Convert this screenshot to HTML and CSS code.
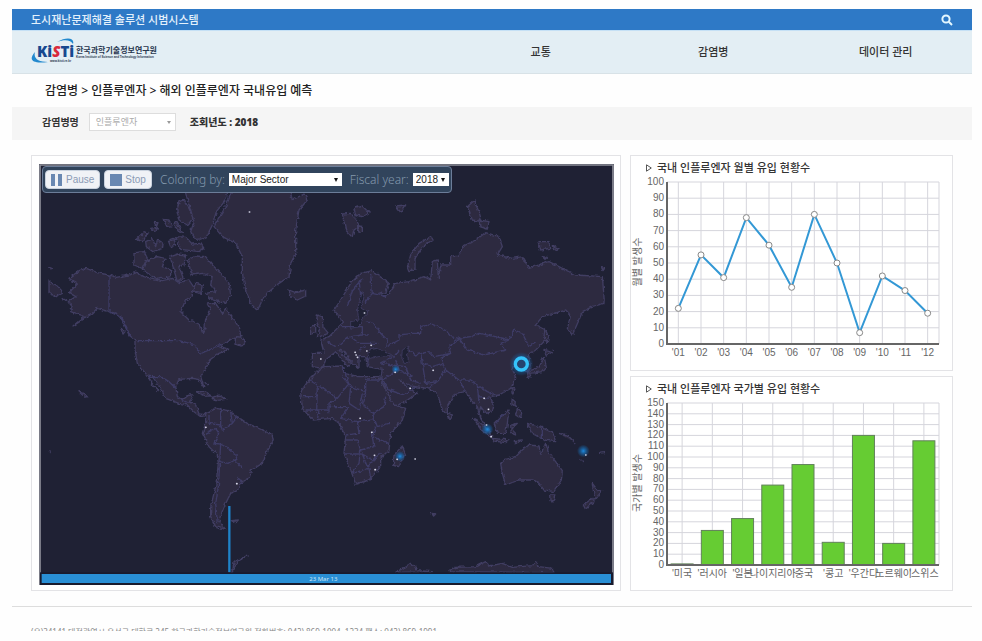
FILE: index.html
```html
<!DOCTYPE html>
<html lang="ko">
<head>
<meta charset="utf-8">
<title>도시재난문제해결 솔루션 시범시스템</title>
<link rel="stylesheet" href="styles.css">
</head>
<body>
<div class="shell">
  <header>
    <div class="topbar">
      <span>도시재난문제해결 솔루션 시범시스템</span>
      <button class="search" aria-label="검색">
        <svg viewBox="0 0 12 12"><circle cx="5" cy="5" r="3.6"/><path d="M7.8 7.8L11 11"/></svg>
      </button>
    </div>
    <div class="navbar">
      <a class="logo" href="#" aria-label="KISTI">
        <svg viewBox="0 0 130 28">
          <path class="swoosh" d="M26 4C36 -2 44 0 42 6C40 2 34 1 26 4Z M4 14C-3 22 1 26 17 24C8 24 2 21 4 14Z"/>
          <text class="kisti" x="6" y="19">Ki<tspan class="red">S</tspan>Ti</text>
          <text class="url" x="19" y="24">www.kisti.re.kr</text>
          <text class="org" x="45" y="15">한국과학기술정보연구원</text>
          <text class="sub" x="45" y="20">Korea Institute of Science and Technology Information</text>
        </svg>
      </a>
      <nav><a href="#">교통</a><a href="#">감염병</a><a href="#">데이터 관리</a></nav>
    </div>
  </header>
  <h1>감염병 &gt; 인플루엔자 &gt; 해외 인플루엔자 국내유입 예측</h1>
  <div class="filter">
    <label for="disease">감염병명</label>
    <span class="pick grey"><select id="disease"><option>인플루엔자</option></select></span>
    <strong>조회년도 : 2018</strong>
  </div>
  <main>
    <section class="panel map-panel">
      <div class="map">
        <svg class="world" viewBox="30 42 1725 1263">
          <defs>
            <filter id="coast" x="0" y="0" width="1" height="1" color-interpolation-filters="sRGB">
              <feTurbulence type="fractalNoise" baseFrequency=".09" numOctaves="2" seed="4" result="n"/>
              <feDisplacementMap in="SourceGraphic" in2="n" scale="12" xChannelSelector="R" yChannelSelector="G"/>
            </filter>
            <radialGradient id="glow"><stop offset="0" stop-color="#1d8ade"/><stop offset=".5" stop-color="#1774c0" stop-opacity=".55"/><stop offset="1" stop-color="#1774c0" stop-opacity="0"/></radialGradient>
          </defs>
          <rect x="30" y="42" width="1725" height="1263" fill="#1f2134"/>
          <g filter="url(#coast)">
            <g class="land">
              <path d="M120 385L150 362 172 355 205 368 240 375 262 382 300 375 320 366 345 380 370 385 400 392 430 385 450 398 480 390 500 420 485 440 470 450 455 485 480 510 510 522 520 550 528 535 530 505 545 480 535 462 560 460 580 490 590 475 615 510 632 535 635 560 600 570 575 590 600 598 570 610 545 628 530 655 515 680 525 712 508 688 490 685 450 688 440 710 445 740 460 750 480 735 492 735 482 755 500 765 510 792 535 795 515 800 495 785 475 765 450 760 410 745 400 725 385 700 370 680 355 678 388 722 375 710 350 670 325 640 318 600 318 570 300 555 280 510 262 490 240 485 205 475 190 490 160 510 132 528 165 500 125 485 130 465 118 455 140 440 120 428 145 402Z"/>
              <path d="M530 790L562 775 600 782 625 800 655 820 700 840 730 855 733 872 715 900 700 940 668 960 660 985 635 1000 625 1022 605 1030 590 1060 575 1095 570 1115 590 1138 560 1130 545 1100 545 1070 560 1010 568 940 565 915 540 890 520 850 530 820Z"/>
              <path d="M610 120L590 170 575 195 555 230 580 260 620 280 640 320 640 370 650 420 665 460 685 482 700 450 720 425 750 400 780 380 785 340 800 310 800 240 810 180 835 150 825 132 790 150 780 110Z"/>
              <path d="M470 130L485 180 495 215 485 245 500 268 530 265 550 225 562 185 590 150 600 110 475 110ZM450 155L465 150 480 175 492 205 475 225 450 210 443 180Z"/>
              <path d="M315 308L345 305 355 325 340 355 315 345ZM350 335L385 320 408 325 400 350 425 360 425 380 385 388 365 375 340 360ZM423 320L445 312 470 315 465 345 450 350 463 385 445 395 435 360ZM475 330L500 318 530 320 550 345 575 370 600 400 605 435 590 460 550 450 530 430 560 425 545 405 550 380 520 370 490 375ZM500 400L520 405 515 430 490 425Z"/>
              <path d="M322 268L345 245 357 250 340 275ZM350 275L370 265 380 290 385 270 402 280 400 295 372 305 352 290ZM365 235L385 232 380 247ZM375 218L387 218 383 228ZM403 208L420 210 430 230 415 232ZM435 222L442 215 460 245 450 247ZM418 272L435 265 440 285 425 290ZM440 260L470 262 490 282 515 280 525 295 510 305 455 298Z"/>
              <path d="M58 350L70 352 66 360ZM60 390L75 405 95 415 100 430 80 440 60 428ZM98 445L115 452M150 725L165 730 178 740 168 742ZM275 535L288 545 282 552ZM620 560L640 562 650 580 635 588 618 580ZM500 725L525 725 548 738 530 738ZM550 742L570 735 590 748 560 752ZM530 700L537 705M607 1112L628 1110 620 1118Z"/>
              <path d="M780 420L800 428 830 420 830 438 805 450 785 440ZM940 192L965 190 985 212 990 230 975 240 970 262 950 240ZM975 175L1000 168 1020 188 1000 200 980 195ZM985 230L1000 232 1000 245 990 247ZM1100 168L1130 165 1115 187ZM1135 350L1145 315 1170 280 1205 260 1212 268 1180 292 1158 325 1158 360 1140 362ZM1315 170L1335 152 1350 185 1358 215 1330 210ZM1350 210L1380 215 1375 237 1353 230ZM1527 275L1560 275 1562 295 1535 300ZM1570 287L1590 295 1575 302ZM1540 320L1555 322 1548 328ZM1718 353L1727 355 1722 362Z"/>
              <path d="M935 450L965 400 995 370 1030 362 1080 400 1070 430 1050 425 1070 442 1100 400 1140 395 1185 380 1205 390 1210 335 1225 330 1228 385 1235 345 1265 345 1265 320 1290 315 1300 290 1340 270 1370 248 1410 260 1420 290 1405 315 1450 325 1480 320 1500 355 1530 345 1560 335 1600 355 1640 375 1720 380 1725 440 1725 460 1690 470 1660 485 1650 510 1630 555 1615 535 1625 495 1610 480 1540 500 1520 525 1550 540 1550 570 1520 600 1498 615 1505 655 1490 665 1480 635 1460 632 1450 655 1460 685 1445 715 1410 735 1380 740 1395 765 1390 785 1370 790 1355 770 1350 790 1370 830 1355 805 1345 770 1325 750 1310 725 1280 730 1255 770 1255 795 1240 780 1225 730 1195 715 1145 708 1110 690 1135 712 1165 730 1120 760 1095 770 1055 685 1060 658 1015 650 1010 620 990 620 990 655 970 640 945 605 930 600 965 640 955 650 920 605 890 630 880 655 850 650 850 610 885 610 875 570 900 560 925 535 940 520 935 505 915 480Z"/>
              <path d="M865 495L880 500 882 530 898 550 865 562 872 535 862 515ZM845 530L860 525 860 548 845 552Z"/>
              <path d="M885 650L940 648 945 670 990 680 1050 680 1070 720 1095 765 1130 775 1120 810 1085 850 1080 900 1055 925 1055 950 1020 990 980 1002 965 960 945 910 950 860 930 820 910 805 850 810 820 775 815 725 840 690 870 660Z"/>
              <path d="M1120 888L1128 910 1110 950 1093 945 1095 915ZM1415 940L1430 928 1460 920 1480 900 1500 885 1530 888 1535 912 1550 880 1560 910 1580 935 1600 962 1597 990 1575 1025 1545 1020 1530 1000 1515 990 1470 990 1430 1005 1420 970ZM1562 1035L1578 1035 1572 1056 1563 1052ZM1690 1000L1705 1020 1718 1023 1700 1048 1695 1035ZM1690 1045L1695 1052 1670 1078 1663 1065Z"/>
              <path d="M1548 535L1558 560 1555 580 1545 560ZM1545 598L1570 605 1552 618ZM1545 620L1552 650 1540 665 1505 670 1495 665 1530 652ZM1495 670L1505 675 1498 685ZM1448 712L1458 720 1450 735ZM1450 745L1462 755 1460 770 1448 762ZM1465 775L1478 785 1475 805 1460 795ZM1333 805L1350 815 1385 845 1388 862 1365 848ZM1395 820L1410 805 1440 780 1435 820 1430 850 1405 850ZM1445 825L1465 820 1450 835 1460 855 1447 850ZM1390 865L1440 870 1430 878 1395 873ZM1455 872L1480 870 1465 882ZM1495 820L1530 830 1570 845 1580 875 1545 870 1510 850ZM1590 850L1620 860 1640 880M1710 910L1725 908M1650 925L1665 938M1255 790L1270 795 1265 808 1256 803ZM1208 1090L1220 1092 1214 1098Z"/>
              <path d="M610 1270L615 1235 658 1215 630 1232 600 1275ZM1100 1267L1130 1250 1145 1240 1170 1262 1210 1265ZM1260 1265L1280 1252 1340 1250 1370 1235 1380 1248 1420 1240 1450 1252 1510 1247 1520 1235 1530 1250 1570 1255 1575 1268ZM60 905L65 910M625 988L640 992"/>
            </g>
            <g class="sea"><path d="M990 510L985 480 1000 425 1005 440 995 475 1020 485 1005 500 990 530 965 535 965 515ZM1015 620L1020 600 1045 595 1090 615 1050 620 1025 625ZM1120 600L1140 588 1135 610 1140 640 1125 640 1118 620Z"/></g>
            <g class="border">
              <path d="M240 375V485M240 485L275 500 305 560M325 572H450L500 585 513 612 540 600 575 585M355 680H395L420 695 440 715M460 750L480 760M540 795L540 820 575 825 580 840 610 820 625 800M530 850L560 835 570 850 555 880 575 882 605 900 625 918 618 930 640 955M575 882L572 935 600 940 618 930M572 940L568 1010 560 1060 565 1120M625 980L640 1000M575 770L575 825M605 785L610 820"/>
              <path d="M955 470L970 420 1000 385M995 440L990 390M1025 375L1030 430 1005 460M1030 430L1070 440M1010 515L1035 520 1050 545 1075 570 1070 590M935 530L965 530 1000 530 1000 555 965 560M960 560L930 585M965 560L990 580 1045 580M895 575L920 590M1010 590L990 600M1020 555L1000 555M1075 590L1110 570 1110 555 1150 550 1175 550 1175 530 1210 523 1250 540 1265 560 1290 565 1260 590 1265 610 1215 620 1200 605 1160 615 1140 600M1290 565L1325 560 1350 550 1400 560 1440 570 1455 540 1480 550 1500 590 1520 575M1290 565L1315 600 1365 615 1430 600 1415 580 1440 570M1265 610L1235 625 1250 660 1290 690 1320 690 1345 705 1375 725 1400 735M1060 640L1090 645 1130 650 1145 690 1175 700M1100 630L1110 660 1150 680M1175 610L1180 640 1210 650 1240 640M1180 640L1190 700 1225 695 1250 660M1200 715L1230 690M1290 690L1310 725M1345 705L1350 760M1350 740L1380 745M1015 620L1020 650M1055 640L1095 620 1110 600M1055 685L1080 720 1125 735 1160 710M1060 690L1100 665"/>
              <path d="M840 690L865 705 925 745 960 700 940 650M865 705L863 785M925 745L900 760 900 790M940 680L965 710 1010 725 1010 680M965 710L960 760 990 780 1000 730M1010 690H1060M1010 725L1000 760 1030 790 1065 770 1070 740M900 770L960 770M870 780L865 810M1030 790L1045 830 1080 820M960 770L935 805 985 815 990 850 950 855M985 815L1035 810M1030 860L1040 830M950 870L985 870 995 900 1035 890 1030 860M945 912H1000L1030 930 1055 910M995 900L990 940 970 970M1000 912L1015 950 1040 925M970 970L1020 955 1025 985M1030 860L1080 880M820 740H865M830 780H900"/>
              <path d="M1540 830V870M1425 790L1400 820"/>
            </g>
          </g>
          <path class="glow" fill="url(#glow)" d="M1441 642a36 36 0 1 0 72 0a36 36 0 1 0 -72 0Z"/>
          <g fill="url(#glow)"><circle cx="1113" cy="919" r="16"/><circle cx="1375" cy="838" r="18"/><circle cx="1663" cy="903" r="19"/><circle cx="1100" cy="658" r="13"/></g>
          <circle class="ring" cx="1477" cy="642" r="18"/>
          <path class="dots" d="M661 186h1M530 832h1M623 1001h1M875 627h1M1006 489h1M1026 586h1M1013 603h1M978 607h1M981 615h1M985 622h1M1098 667h1M1212 661h1M1143 715h1M1365 745h1M1378 778h1M1372 825h1M1386 860h1M993 805h1M1028 847h1M1036 916h1M1038 959h1M1104 928h1M1158 927h1M1670 915h1"/>
          <path class="stem" d="M601 1068V1267"/>
          <path class="edge" d="M33 1305V45H1752V1305"/>
          <rect x="33" y="1267" width="1719" height="38" fill="#191b2d"/>
          <rect x="38" y="1272" width="1708" height="27" fill="#298fd5"/>
          <text class="date" x="883" y="1292">23 Mar 13</text>
        </svg>
        <div class="tools">
          <button><svg viewBox="0 0 12 12"><path d="M0 0h4v12H0zM7 0h4v12H7z"/></svg>Pause</button>
          <button><svg viewBox="0 0 12 12"><path d="M0 0h12v12H0z"/></svg>Stop</button>
          <label for="sector">Coloring by:</label>
          <span class="pick sector"><select id="sector"><option>Major Sector</option></select></span>
          <label for="year">Fiscal year:</label>
          <span class="pick year"><select id="year"><option>2018</option></select></span>
        </div>
      </div>
    </section>
    <div class="charts">
      <section class="panel">
        <h2><svg viewBox="0 0 6 8"><path d="M.5 .8L5.3 4 .5 7.2Z"/></svg>국내 인플루엔자 월별 유입 현황수</h2>
        <svg class="chart" id="monthly" viewBox="0 0 321 190"></svg>
      </section>
      <section class="panel">
        <h2><svg viewBox="0 0 6 8"><path d="M.5 .8L5.3 4 .5 7.2Z"/></svg>국내 인플루엔자 국가별 유입 현황수</h2>
        <svg class="chart" id="country" viewBox="0 0 321 190"></svg>
      </section>
    </div>
  </main>
  <footer>(우)34141 대전광역시 유성구 대학로 245 한국과학기술정보연구원 전화번호: 042) 869-1004, 1234 팩스: 042) 869-1991</footer>
</div>
<script src="charts.js"></script>
</body>
</html>
```
FILE: styles.css
```css
* { box-sizing: border-box; }
body {
  margin: 0;
  background: #fefefe;
  color: #333;
  font: 11px/16px "Noto Sans", "Noto Sans CJK KR", sans-serif;
}
a { color: inherit; text-decoration: none; }
button, select { font: inherit; }
.shell { margin: 9px 10px 0 12px; }
.topbar {
  display: flex;
  align-items: center;
  justify-content: space-between;
  height: 21px;
  padding: 0 19px;
  background: #2e79c6;
  color: #e4f1fc;
  font-weight: 500;
}
.search { display: flex; padding: 0; border: 0; background: none; }
.search svg { width: 12px; height: 12px; fill: none; stroke: #e4f7ff; stroke-width: 2; }
.navbar {
  display: flex;
  align-items: center;
  justify-content: space-between;
  height: 44px;
  padding-left: 19px;
  background: #e3eef4;
  border-top: 1px solid #c5e0f5;
  border-bottom: 1px solid #d8e2e7;
}
.logo svg { display: block; width: 130px; height: 28px; }
.logo text { font-family: "Liberation Sans", "Noto Sans CJK KR", sans-serif; font-weight: bold; fill: #28364e; }
.logo .kisti { font-family: "Open Sans", sans-serif; font-size: 15px; font-weight: 800; fill: #17488f; }
.logo .red { font-style: italic; fill: #d92a3c; }
.logo .url { font-size: 3px; }
.logo .org { font-size: 8px; }
.logo .sub { font-size: 3px; }
.swoosh { fill: #2389ce; }
nav { display: grid; grid-template-columns: repeat(3, 1fr); width: 55%; text-align: center; font-weight: 500; }
h1 { margin: 0; padding: 8px 33px; font-size: 12px; line-height: 17px; font-weight: 500; color: #222; }
.filter {
  display: flex;
  align-items: center;
  height: 33px;
  padding: 0 30px 3px;
  background: #f5f5f5;
  font-size: 10px;
  font-weight: bold;
}
.filter .pick { width: 87px; margin: 0 14px 0 10px; }
.pick { position: relative; display: inline-flex; }
.pick select {
  appearance: none;
  width: 100%;
  height: 13px;
  padding: 0 3px;
  border: 0;
  border-radius: 0;
  background: #fff;
  color: #222;
  font: 10px/13px "Liberation Sans", sans-serif;
}
.pick::after {
  content: "";
  position: absolute;
  right: 4px;
  top: 5px;
  border: 2px solid transparent;
  border-top: 4px solid #111;
  border-bottom: 0;
  pointer-events: none;
}
.pick.grey select {
  height: 18px;
  padding: 0 6px;
  border: 1px solid #ddd;
  color: #aaa;
  font: 9px/16px "Noto Sans CJK KR", sans-serif;
}
.pick.grey::after { right: 5px; top: 8px; border-top: 3px solid #999; }
main {
  display: grid;
  grid-template-columns: 590fr 323fr;
  gap: 9px;
  padding: 15px 19px;
  border-bottom: 1px solid #ddd;
}
.panel { border: 1px solid #e3e3e6; background: #fff; }
.map-panel { padding: 8px 6px 5px 7px; }
.map { position: relative; }
.world { display: block; width: 100%; height: auto; }
.land { fill: #2d2a40; stroke: #413e62; stroke-width: 4; stroke-linejoin: round; }
.sea { fill: #1f2134; stroke: #3c395c; stroke-width: 3; }
.border { fill: none; stroke: #3e3c66; stroke-width: 4; stroke-linejoin: round; }
.dots { stroke: #d5d5e6; stroke-width: 5; stroke-linecap: round; }
.ring { fill: #25436f; stroke: #35c3fb; stroke-width: 10; }
.stem { stroke: #1f83c8; stroke-width: 7; }
.edge { fill: none; stroke: #8d8e98; stroke-width: 5; }
.date { font: 18px "Noto Sans", sans-serif; fill: #cde4f5; text-anchor: middle; }
.tools {
  position: absolute;
  left: 3px;
  top: 2px;
  display: flex;
  align-items: center;
  height: 27px;
  padding: 0 2px;
  border: 1px solid #6c7d99;
  border-radius: 4px;
  background: #31445c;
  color: #8499ad;
  font: 12px/16px "Noto Sans", sans-serif;
  white-space: nowrap;
}
.tools button {
  display: flex;
  align-items: center;
  gap: 3px;
  height: 19px;
  margin-right: 4px;
  padding: 0 5px;
  border: 1px solid #c9d2de;
  border-radius: 4px;
  background: #f0f2f6;
  color: #8b9bb5;
  font: 10px/16px "Liberation Sans", sans-serif;
}
.tools button svg { width: 12px; height: 12px; fill: #6988b2; }
.tools label { margin: 0 4px; font-weight: 300; }
.tools .sector { width: 113px; margin-right: 4px; }
.tools .year { width: 36px; }
.charts { display: grid; grid-template-rows: 1fr 1fr; gap: 5px; }
.charts .panel { padding-top: 4px; }
h2 {
  display: flex;
  align-items: center;
  gap: 5px;
  margin: 0;
  padding-left: 15px;
  font-size: 11px;
  line-height: 16px;
  font-weight: 500;
  white-space: nowrap;
}
h2 svg { width: 6px; height: 8px; fill: none; stroke: #555; }
.chart { display: block; width: 100%; height: auto; }
.chart text { font: 10px "Liberation Sans", "Noto Sans CJK KR", sans-serif; fill: #666; text-anchor: middle; }
.chart .tick { text-anchor: end; }
.grid { stroke: #d5d5dc; fill: none; }
.axis { stroke: #666; stroke-width: 2; fill: none; }
.line { stroke: #3398d5; stroke-width: 2; fill: none; }
.point { fill: #fff; stroke: #888; }
.bar { fill: #66cc33; stroke: #61805a; }
footer {
  height: 24px;
  padding: 18px 19px 0;
  overflow: hidden;
  color: #888;
  font-size: 8px;
  line-height: 13px;
  white-space: nowrap;
}
```
FILE: charts.js
```js
const LEFT = 36, RIGHT = 308, TOP = 6, BASE = 168;

function text(x, y, s, attrs = '') {
  return `<text x="${x}" y="${y}" ${attrs}>${s}</text>`;
}

function draw(id, title, labels, values, max, bars) {
  const step = (RIGHT - LEFT) / labels.length;
  const px = i => LEFT + step * (i + 0.5);
  const py = v => BASE - (BASE - TOP) * v / max;
  let grid = `M${RIGHT} ${TOP}V${BASE}`;
  let out = '';
  for (let v = 0; v <= max; v += 10) {
    grid += `M${LEFT} ${py(v)}H${RIGHT}`;
    out += text(LEFT - 3, py(v) + 3, v, 'class="tick"');
  }
  labels.forEach((l, i) => {
    grid += `M${px(i)} ${TOP}V${BASE}`;
    out += text(px(i), BASE + 12, l);
  });
  out = `<path class="grid" d="${grid}"/>` + out;
  if (bars) {
    values.forEach((v, i) => {
      out += `<rect class="bar" x="${px(i) - 11}" y="${py(v)}" width="22" height="${BASE - py(v)}"/>`;
    });
  } else {
    out += `<polyline class="line" points="${values.map((v, i) => px(i) + ',' + py(v)).join(' ')}"/>`;
    values.forEach((v, i) => { out += `<circle class="point" cx="${px(i)}" cy="${py(v)}" r="3"/>`; });
  }
  out += `<path class="axis" d="M${LEFT} ${TOP}V${BASE}H${RIGHT}"/>`;
  out += text(0, 0, title, 'transform="translate(10 86) rotate(-90)"');
  document.getElementById(id).innerHTML = out;
}

draw('monthly', '월별 발생수',
  ["'01", "'02", "'03", "'04", "'05", "'06", "'07", "'08", "'09", "'10", "'11", "'12"],
  [22, 55, 41, 78, 61, 35, 80, 50, 7, 42, 33, 19], 100, false);
draw('country', '국가별 발생수',
  ["'미국", "'러시아", "'일본", "나이지리아", "'중국", "'콩고", "'우간다", "노르웨이", "'스위스"],
  [1, 32, 43, 74, 93, 21, 120, 20, 115], 150, true);
```
